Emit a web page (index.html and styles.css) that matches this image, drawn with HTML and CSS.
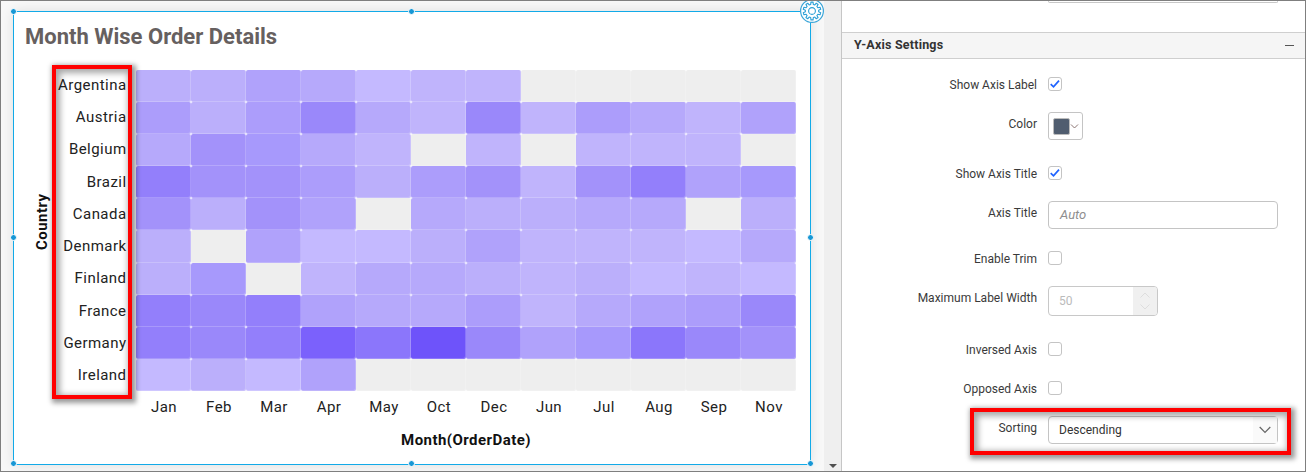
FILE: index.html
```html
<!DOCTYPE html>
<html lang="en">
<head>
<meta charset="utf-8">
<title>Month Wise Order Details</title>
<link rel="stylesheet" href="styles.css">
</head>
<body>
<div class="app">
  <main class="canvas">
    <section class="widget">
      <h1 class="title">Month Wise Order Details</h1>
      <div class="chart">
        <div class="y-title">Country</div>
        <div class="y-labels">
          <span>Argentina</span><span>Austria</span><span>Belgium</span><span>Brazil</span><span>Canada</span><span>Denmark</span><span>Finland</span><span>France</span><span>Germany</span><span>Ireland</span>
          <div class="highlight highlight-labels"></div>
        </div>
        <div class="cells" id="cells"></div>
        <div class="x-labels">
          <span>Jan</span><span>Feb</span><span>Mar</span><span>Apr</span><span>May</span><span>Oct</span><span>Dec</span><span>Jun</span><span>Jul</span><span>Aug</span><span>Sep</span><span>Nov</span>
        </div>
        <div class="x-title">Month(OrderDate)</div>
      </div>
      <i class="handle tl"></i><i class="handle tc"></i>
      <i class="handle ml"></i><i class="handle mr"></i>
      <i class="handle bl"></i><i class="handle bc"></i><i class="handle br"></i>
      <svg class="gear" id="gear" width="26" height="26" viewBox="-13 -13 26 26">
        <circle r="11.4" fill="#fff" stroke="#3aa5d8" stroke-width="1.2"/>
        <path id="gear-teeth" fill="none" stroke="#2b9fd6" stroke-width="1.1" stroke-linejoin="round"/>
        <circle r="3.4" fill="none" stroke="#2b9fd6" stroke-width="1.1"/>
      </svg>
    </section>
  </main>
  <div class="scrollbar"><i class="arrow-down"></i></div>
  <aside class="panel">
    <div class="prev-field"></div>
    <header class="panel-head"><span>Y-Axis Settings</span><i class="minus"></i></header>
    <div class="form">
      <div class="row h35 short"><label>Show Axis Label</label><span class="check"><svg width="12" height="12" viewBox="0 0 12 12"><path d="M1.7 6.2 4.5 8.8 10 2.6"/></svg></span></div>
      <div class="row h54"><label>Color</label><span class="color"><i class="swatch"></i><svg width="9" height="5" viewBox="0 0 9 5"><path d="M1 .5 4.5 4 8 .5"/></svg></span></div>
      <div class="row h35 short"><label>Show Axis Title</label><span class="check"><svg width="12" height="12" viewBox="0 0 12 12"><path d="M1.7 6.2 4.5 8.8 10 2.6"/></svg></span></div>
      <div class="row h50"><label>Axis Title</label><span class="input placeholder">Auto</span></div>
      <div class="row h35 short"><label>Enable Trim</label><span class="check"></span></div>
      <div class="row h56"><label>Maximum Label Width</label><span class="number"><span>50</span><span class="spin"><svg width="12" height="20" viewBox="0 0 12 20"><path d="M1.5 6.5 6 2l4.5 4.5M1.5 13.5 6 18l4.5-4.5"/></svg></span></span></div>
      <div class="row h39 short"><label>Inversed Axis</label><span class="check"></span></div>
      <div class="row h35 short"><label>Opposed Axis</label><span class="check"></span></div>
      <div class="row h28"><label>Sorting</label><span class="input select"><span>Descending</span><span class="drop"><svg width="12" height="8" viewBox="0 0 12 8"><path d="M.7 1 6 6.5 11.3 1"/></svg></span></span>
        <div class="highlight highlight-sort"></div></div>
    </div>
  </aside>
</div>
<script src="chart.js"></script>
</body>
</html>
```
FILE: styles.css
```css
* { box-sizing: border-box; }
body { margin: 0; font-family: Roboto, "Liberation Sans", sans-serif; background: #fff; }
.app { width: 1306px; height: 472px; border: 1px solid #7f7f7f; display: flex; overflow: hidden; }

.canvas { width: 823px; padding: 10px 13px 7px 12px; background: #f8f8f8; }
.widget { position: relative; width: 798px; height: 454px; border: 1px solid #12aae8; background: #fff; box-shadow: 0 0 12px rgba(0, 0, 0, .1); }
.title { margin: 12px 0 0 11px; height: 26px; font-size: 22px; line-height: 26px; font-weight: 700; color: #66605f; white-space: nowrap; }
.chart { display: grid; grid-template-columns: 36px 76px 660px; grid-template-rows: 321px 32px 33px; margin: 20px 0 0 10px; color: #222; font-size: 15px; letter-spacing: .45px; }
.y-title { writing-mode: vertical-rl; transform: rotate(180deg); text-align: center; font-weight: 700; line-height: 18px; width: 18px; margin: -9px 0 9px 9px; color: #111; }
.y-labels { position: relative; display: grid; grid-template: repeat(10, 32.22px) / 66.5px; justify-items: end; line-height: 31px; }
.cells { display: grid; grid-template: repeat(10, 32.1px) / repeat(12, 55px); }
.cell { border-radius: 2px; box-shadow: inset -1px -1px rgba(255, 255, 255, .2); }
.empty { background: #eee; }
.x-labels { grid-column: 3; display: grid; grid-template-columns: repeat(12, 55px); text-align: center; line-height: 32px; padding-left: .5px; }
.x-title { grid-column: 3; text-align: center; font-weight: 700; line-height: 34px; color: #111; }

.handle { position: absolute; width: 7px; height: 7px; border-radius: 50%; background: #1797d5; border: 1px solid #fff; }
.tl, .ml, .bl { left: -4px; }
.mr, .br { right: -4px; }
.tc, .bc { left: 394px; }
.tl, .tc { top: -4px; }
.ml, .mr { top: 222px; }
.bl, .bc, .br { bottom: -3px; }
.gear { position: absolute; right: -14.5px; top: -14px; }
.highlight { position: absolute; border: 4px solid #f00; box-shadow: 2px 2px 5px 2px rgba(0, 0, 0, .4), inset 2px 2px 6px 2px rgba(0, 0, 0, .35); pointer-events: none; }
.highlight-labels { left: -8px; top: -5px; width: 80px; height: 334px; }

.scrollbar { width: 17px; background: #efefef; display: flex; align-items: flex-end; justify-content: center; padding-bottom: 3px; }
.arrow-down { border: 4px solid transparent; border-top-color: #505050; border-bottom: 0; }

.panel { width: 464px; border-left: 1px solid #c6c6c6; font-size: 12px; color: #3a3a3a; }
.prev-field { width: 230px; height: 2px; margin-left: 206px; border: 1px solid #c8c8c8; border-top: 0; border-radius: 0 0 4px 4px; }
.panel-head { height: 27px; margin-top: 29px; padding: 0 11px 0 12px; display: flex; align-items: center; justify-content: space-between; border: solid #cfcfcf; border-width: 1px 0; background: #f5f5f5; font-weight: 700; font-size: 12.5px; letter-spacing: .2px; color: #333; }
.panel-head span { padding-bottom: 2px; }
.minus { width: 9px; height: 1.5px; background: #555; }
.form { padding-top: 18px; }
.row { position: relative; display: grid; grid-template-columns: 195px auto; column-gap: 11px; align-items: start; justify-content: start; }
.h28 { height: 28px; } .h35 { height: 35px; } .h39 { height: 39px; } .h50 { height: 50px; } .h54 { height: 54px; } .h56 { height: 56px; }
label { text-align: right; line-height: 25px; white-space: nowrap; }
.short label { line-height: 17px; }
.check { width: 14px; height: 14px; border: 1px solid #c4c4c4; border-radius: 3px; background: #fff; display: flex; }
svg path { fill: none; }
.check path { stroke: #1f63ff; stroke-width: 1.7; }
.color { width: 35px; height: 28px; border: 1px solid #c4c4c4; border-radius: 3px; display: flex; align-items: center; padding-left: 4px; }
.swatch { width: 17px; height: 17px; border: 1px solid #bbb; border-radius: 2px; background: #505d6f; }
.color path { stroke: #806864; stroke-width: .9; }
.input { width: 230px; height: 28px; border: 1px solid #c4c4c4; border-radius: 4px; padding-left: 11px; line-height: 26px; }
.placeholder { font-style: italic; font-size: 13px; color: #8e8e8e; }
.number { width: 110px; height: 30px; border: 1px solid #c8c8c8; border-radius: 4px; padding-left: 10px; display: flex; justify-content: space-between; line-height: 28px; color: #bbb; overflow: hidden; }
.spin { width: 24px; background: #f0f0f0; display: flex; align-items: center; justify-content: center; }
.spin path { stroke: #ddd; }
.select { display: flex; justify-content: space-between; padding-left: 10px; color: #333; }
.drop { width: 24px; background: #fafafa; display: flex; align-items: center; justify-content: center; }
.drop path { stroke: #666; stroke-width: 1.2; }
.highlight-sort { left: 128px; top: -8px; width: 321px; height: 47px; }
```
FILE: chart.js
```js
// One letter per cell: a is the lowest order value, m the highest, a dot means no orders.
const rows = [
  'ccedabb.....',
  'fcfidbibfdbe',
  'dhgdb.b.bbb.',
  'jhhfcfhbhjeg',
  'hche.dccdd.c',
  'c.eaacebbbad',
  'cg.bddcbcaba',
  'jijeddfbdefi',
  'jijlkmiegkih',
  'acae........'
];
const shades = ['#c4b9ff', '#c0b4fc', '#bbaffb', '#b6a9fb', '#b0a2fb', '#ac9dfb', '#a799fc', '#a392fa', '#9a88fa', '#937ffb', '#8b76fb', '#7b61fc', '#6e53fa'];
const cells = document.getElementById('cells');
for (const row of rows) {
  for (const level of row) {
    const cell = document.createElement('div');
    cell.className = level === '.' ? 'cell empty' : 'cell';
    if (level !== '.') cell.style.background = shades[level.charCodeAt(0) - 97];
    cells.append(cell);
  }
}

// Gear outline: ten teeth around the centre.
const points = [];
for (let i = 0; i < 10; i++) {
  for (const [offset, radius] of [[-11, 6.7], [-7, 8.9], [7, 8.9], [11, 6.7]]) {
    const angle = (i * 36 + offset - 90) * Math.PI / 180;
    points.push((radius * Math.cos(angle)).toFixed(2) + ' ' + (radius * Math.sin(angle)).toFixed(2));
  }
}
document.getElementById('gear-teeth').setAttribute('d', 'M' + points.join('L') + 'Z');
```
